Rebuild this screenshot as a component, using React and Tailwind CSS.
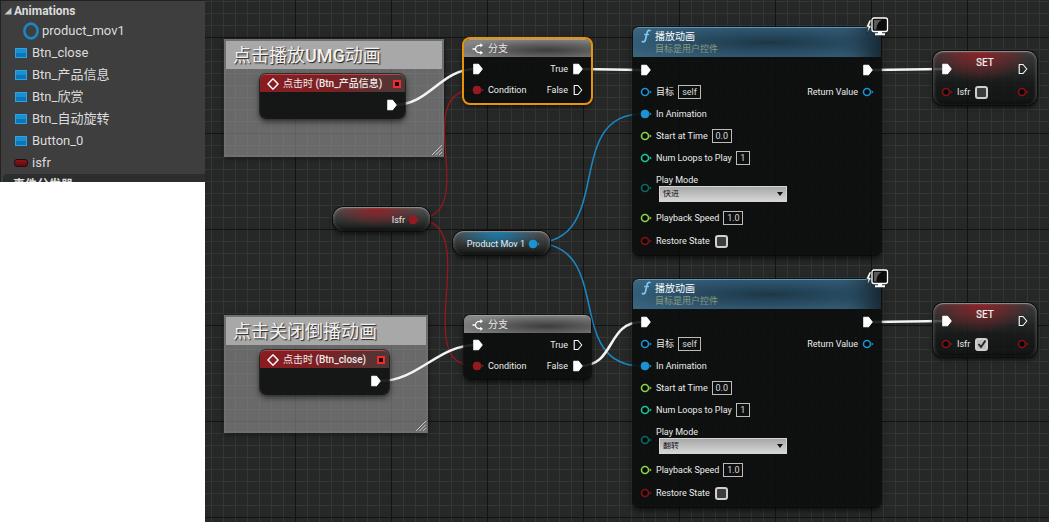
import React from "react";

const FONT = "font-['Roboto','Noto_Sans_CJK_SC',sans-serif]";

const PIN_COLORS = {
  red: "#981a20",
  darkRed: "#8a1016",
  blue: "#1c93d4",
  lime: "#8fd14a",
  mint: "#22c39a",
  teal: "#0b6b62",
};

function ExecPin({ filled = true }) {
  return (
    <svg className="h-3 w-2.5 shrink-0" viewBox="0 0 10 12" aria-hidden="true">
      <path
        d={filled ? "M.8 1.300h4.600L9.200 6l-3.800 4.700H.8z" : "M1.200 1.500h3.800L8.800 6 5 10.500H1.200z"}
        fill={filled ? "#fff" : "none"}
        stroke="#fff"
        strokeWidth="1.100"
        strokeLinejoin="round"
      />
    </svg>
  );
}

function DataPin({ color, filled = false }) {
  const c = PIN_COLORS[color];
  return (
    <svg className="h-3 w-2.5 shrink-0 overflow-visible" viewBox="0 0 10 12" aria-hidden="true">
      <circle cx="4" cy="6" r={filled ? 3.9 : 3.5} fill={filled ? c : "#04090a"} stroke={c} strokeWidth={filled ? 1 : 1.6} />
      <path d="M8.600 4.200L10.600 6l-2 1.800z" fill={c} />
    </svg>
  );
}

function BranchIcon() {
  return (
    <svg className="h-3 w-3 shrink-0" viewBox="0 0 12 12" fill="none" stroke="#fff" aria-hidden="true">
      <path d="M.5 6H3M9 2.300H7.500C5 2.300 3.500 4 3.500 6s1.500 3.700 4 3.700H9" strokeWidth="1.300" />
      <path d="M8.300.3L11 2.300 8.300 4.300zM8.300 7.700L11 9.700l-2.700 2z" fill="#fff" strokeWidth="0" />
    </svg>
  );
}

function EventIcon() {
  return (
    <svg className="h-3 w-3 shrink-0" viewBox="0 0 12 12" fill="none" stroke="#fff" strokeWidth="1.400" aria-hidden="true">
      <path d="M4.500 2.300L1 6l3.500 3.700M7.500 2.300L11 6 7.500 9.700M4.500 2.300L6 .9l1.500 1.400M4.500 9.700L6 11.100l1.500-1.400" />
    </svg>
  );
}

function ClientBadge() {
  return (
    <svg className="absolute -top-2.5 -right-2 h-5 w-6" viewBox="0 0 24 20" aria-hidden="true">
      <path d="M4.300 3L1 10h2.200L2 16.500 6.500 8.500H4.400L6.500 3z" fill="#fff" stroke="#111" strokeWidth=".6" />
      <rect x="7" y="1" width="15.500" height="13.500" rx="2" fill="#0c0c0c" stroke="#fff" strokeWidth="1.300" />
      <path d="M9 3h7.500C12.500 5.500 11.500 9 11.500 12.500H9z" fill="#5a5a5a" />
      <path d="M13 15h4v1.300h3v2H10v-2h3z" fill="#fff" />
    </svg>
  );
}

function CheckBox({ label, checked = false }) {
  return (
    <label className="flex items-center gap-[5px]">
      <span>{label}</span>
      <span className="grid place-items-center">
        <input
          type="checkbox"
          defaultChecked={checked}
          className="peer col-start-1 row-start-1 h-[13px] w-[13px] appearance-none rounded-[3px] border-2 border-[#cfcfcf] bg-[#3a3d3c] checked:bg-[#bdbdbd]"
        />
        <svg className="pointer-events-none invisible col-start-1 row-start-1 h-3 w-3 peer-checked:visible" viewBox="0 0 12 12" aria-hidden="true">
          <path d="M2.500 6l2.500 3 4.500-6.500" fill="none" stroke="#222" strokeWidth="1.800" />
        </svg>
      </span>
    </label>
  );
}

function ValueField({ label, value, width }) {
  return (
    <label className="flex items-center gap-1">
      <span>{label}</span>
      <input
        type="text"
        defaultValue={value}
        className={`h-3.5 border border-[#bcbcbc] bg-transparent p-0 text-center leading-none text-[#d8d8d8] ${width}`}
      />
    </label>
  );
}

const NODE = "absolute rounded-md bg-[#0b0e0d]/90 shadow-[0_0_0_1px_rgba(8,8,8,0.6),0_3px_6px_rgba(0,0,0,0.7)]";

function BranchNode({ place, active }) {
  const selected = active === "true";
  return (
    <section
      className={`${NODE} ${place} w-[127px] pb-1 ${selected ? "outline-2 outline-[#e8930c]" : ""}`}
    >
      <header className="flex h-[18px] items-center gap-1 rounded-t-md border-t border-[#a0a0a0] bg-[radial-gradient(ellipse_at_65%_60%,#3c3c3c,#5a5a5a_35%,#858585_80%)] px-2 text-[10px] text-[#e8e8e8]">
        <BranchIcon />
        <h3>分支</h3>
      </header>
      <div className="flex h-6 items-center justify-between pr-2 pl-[9px]">
        <ExecPin />
        <span className="flex items-center gap-[5px]">
          True <ExecPin filled={selected} />
        </span>
      </div>
      <div className="flex h-[18px] items-center justify-between pr-2 pl-[9px]">
        <span className="flex items-center gap-[5px]">
          <DataPin color="red" filled /> Condition
        </span>
        <span className="flex items-center gap-[5px]">
          False <ExecPin filled={!selected} />
        </span>
      </div>
    </section>
  );
}

function EventNode({ place, name }) {
  return (
    <section className={`${NODE} ${place} h-11`}>
      <header className="flex h-[18px] items-center gap-1 rounded-t-md border-t border-[#b5484a] bg-linear-to-r from-[#8b1c20] via-[#7a2023] to-[#4a3737] pr-1 pl-[7px] text-[10px]">
        <EventIcon />
        <h3 className="grow whitespace-nowrap">
          点击时 <b className="font-medium">({name})</b>
        </h3>
        <span className="h-2 w-2 border-2 border-[#f02a2a] bg-[#1a0505]" />
      </header>
      <div className="flex h-[26px] items-center justify-end pr-2">
        <ExecPin />
      </div>
    </section>
  );
}

function PlayNode({ place, mode }) {
  const row = "flex h-[22px] items-center gap-[5px]";
  return (
    <section className={`${NODE} ${place} w-[248px] pb-0.5`}>
      <ClientBadge />
      <header className="flex h-[30px] gap-1 rounded-t-md border-t border-[#5d93b4] bg-[radial-gradient(ellipse_at_55%_50%,#1d3848,#2d536c_50%,#43728f)] pl-2 text-[10px] shadow-[inset_-30px_0_30px_-16px_#14222b]">
        <svg className="h-4 w-2.5 shrink-0" viewBox="0 0 10 16" fill="none" stroke="#7cc8f5" aria-hidden="true">
          <path d="M9.500 3C8 1.500 6.500 2.500 6 5L4.500 11.500C4 13.800 2.500 14.500.8 13.300" strokeWidth="1.700" />
          <path d="M3 6.500h5" strokeWidth="1.300" />
        </svg>
        <div className="pt-0.5 leading-[13px]">
          <h3 className="text-white">播放动画</h3>
          <p className="text-[9px] text-[#8c9a7c]">目标是用户控件</p>
        </div>
      </header>
      <div className="px-2">
        <div className="flex h-6 items-center justify-between pt-0.5">
          <ExecPin />
          <ExecPin />
        </div>
        <div className="flex justify-between">
          <div className={row}>
            <DataPin color="blue" />
            <ValueField label="目标" value="self" width="w-[23px]" />
          </div>
          <div className={row}>
            Return Value <DataPin color="blue" />
          </div>
        </div>
        <div className={row}>
          <DataPin color="blue" filled /> In Animation
        </div>
        <div className={row}>
          <DataPin color="lime" />
          <ValueField label="Start at Time" value="0.0" width="w-5" />
        </div>
        <div className={row}>
          <DataPin color="mint" />
          <ValueField label="Num Loops to Play" value="1" width="w-3.5" />
        </div>
        <div className="flex h-[38px] items-center gap-[5px]">
          <DataPin color="teal" />
          <label className="flex flex-col leading-3">
            <span>Play Mode</span>
            <span className="ml-[3px] grid w-32 items-center">
              <select
                defaultValue={mode}
                className="col-start-1 row-start-1 h-4 appearance-none border border-[#d5d5d5] bg-linear-to-b from-[#a8a8a8] to-[#d6d6d6] px-[3px] text-[8px] leading-none text-[#111]"
              >
                <option>快进</option>
                <option>翻转</option>
              </select>
              <svg className="pointer-events-none col-start-1 row-start-1 mr-1 h-1 w-1.5 justify-self-end" viewBox="0 0 6 4" aria-hidden="true">
                <path d="M0 0h6L3 4z" fill="#111" />
              </svg>
            </span>
          </label>
        </div>
        <div className={row}>
          <DataPin color="lime" />
          <ValueField label="Playback Speed" value="1.0" width="w-5" />
        </div>
        <div className="flex h-6 items-center gap-[5px]">
          <DataPin color="darkRed" />
          <CheckBox label="Restore State" />
        </div>
      </div>
    </section>
  );
}

const GLASS = "absolute border-t border-[#8a8a8a] shadow-[0_0_0_1px_#0c0c0c,0_3px_5px_rgba(0,0,0,0.6),inset_0_-2px_3px_rgba(0,0,0,0.5),inset_2px_0_3px_-1px_rgba(200,200,200,0.4),inset_-2px_0_3px_-1px_rgba(200,200,200,0.4)]";

function SetNode({ place, checked }) {
  return (
    <section
      className={`${GLASS} ${place} h-[54px] w-[104px] rounded-[10px] bg-[radial-gradient(ellipse_50%_55%_at_45%_0%,#8a2227,transparent),linear-gradient(to_bottom,#3f3f3fd0,#141616d0_60%,#0e1010d0)] px-[9px]`}
    >
      <div className="flex h-[34px] justify-between">
        <span className="flex items-center">
          <ExecPin />
        </span>
        <h3 className="pt-[5px] text-[10px] font-medium">SET</h3>
        <span className="flex items-center">
          <ExecPin filled={false} />
        </span>
      </div>
      <div className="flex h-3 items-center justify-between">
        <span className="flex items-center gap-[5px]">
          <DataPin color="darkRed" />
          <CheckBox label="Isfr" checked={checked} />
        </span>
        <DataPin color="darkRed" />
      </div>
    </section>
  );
}

function VariableNode({ place, label, tint, color }) {
  return (
    <section className={`${GLASS} ${place} ${tint} flex h-6 w-[97px] items-center justify-end gap-1 rounded-[11px] pr-[11px] whitespace-nowrap`}>
      {label} <DataPin color={color} filled />
    </section>
  );
}

function CommentBox({ place, title }) {
  return (
    <section className={`absolute ${place} h-[118px] border-2 border-[#707070]/80 bg-[#969696]/60 shadow-[0_1px_5px_rgba(0,0,0,0.6)]`}>
      <h2 className="h-7 bg-[#a8a8a8] pl-[7px] text-[18px] leading-[30px] font-normal whitespace-nowrap text-[#f2f2f2] [text-shadow:1px_1px_1px_#222]">
        {title}
      </h2>
      <svg className="absolute right-0 bottom-0 h-2.5 w-2.5" viewBox="0 0 10 10" stroke="#c8c8c8" aria-hidden="true">
        <path d="M0 10L10 0M3.500 10L10 3.500M7 10l3-3" />
      </svg>
    </section>
  );
}

function Wires() {
  return (
    <svg className="absolute inset-0 h-full w-full" fill="none" aria-hidden="true">
      <g transform="translate(-205 0)">
        <g stroke="#96181e" strokeWidth="1.300">
          <path d="M416 219C484 219 408 90 474 90" />
          <path d="M416 219C486 219 408 366 474 366" />
        </g>
        <g stroke="#1a86c2" strokeWidth="1.600">
          <path d="M534 243C616 243 562 114 642 114" />
          <path d="M534 243C616 243 562 366 642 366" />
        </g>
        <g stroke="#f4f4f4" strokeWidth="2.600">
          <path d="M394 105C430 105 440 69 476 69" />
          <path d="M380 381C418 381 438 345 476 345" />
          <path d="M580 69L642 70" />
          <path d="M580 366C616 366 606 322 642 322" />
          <path d="M872 70L944 69" />
          <path d="M872 322L944 321" />
        </g>
      </g>
    </svg>
  );
}

const BUTTONS = ["Btn_close", "Btn_产品信息", "Btn_欣赏", "Btn_自动旋转", "Button_0"];

function Sidebar() {
  return (
    <aside className="h-[182px] w-[205px] shrink-0 overflow-hidden border-t border-l border-[#222] bg-[#3e3e3e] text-[13px] text-[#dcdcdc]">
      <h2 className="flex h-[19px] items-center gap-0.5 pl-[3px] text-[12px] font-bold">
        <svg className="h-2 w-2" viewBox="0 0 8 8" aria-hidden="true">
          <path d="M7.500.5v7H.5z" fill="#c8c8c8" />
        </svg>
        Animations
      </h2>
      <ul>
        <li className="flex h-[22px] items-center gap-[3px] pl-[22px]">
          <svg className="h-[18px] w-4" viewBox="0 0 16 18" aria-hidden="true">
            <ellipse cx="8" cy="9" rx="6.600" ry="7.400" fill="none" stroke="#1b86c4" strokeWidth="2.600" />
          </svg>
          product_mov1
        </li>
        {BUTTONS.map((name) => (
          <li key={name} className="flex h-[22px] items-center gap-[5px] pl-3.5">
            <span className="h-2.5 w-3 border border-[#2ba3e4] bg-linear-to-b from-[#1b8fd0] from-50% to-[#0d76b4] to-50%" />
            {name}
          </li>
        ))}
        <li className="flex h-[22px] items-center gap-1 pl-[13px]">
          <span className="h-2 w-3.5 rounded-[3px] border border-[#2a0a0c] bg-linear-to-b from-[#8c161b] to-[#5a0c10]" />
          isfr
        </li>
      </ul>
      <h2 className="ml-0.5 h-5 rounded-tl-sm bg-[#2c2e2d] pt-0.5 pl-2.5 text-[12px] leading-[18px] font-bold">事件分发器</h2>
    </aside>
  );
}

export default function App() {
  return (
    <main className={`flex min-h-screen items-start bg-white ${FONT}`}>
      <Sidebar />
      <div className="relative min-h-[522px] flex-1 self-stretch overflow-hidden bg-[#262727] bg-[linear-gradient(to_right,#121313_1px,transparent_1px),linear-gradient(to_bottom,#121313_1px,transparent_1px),linear-gradient(to_right,#343535_1px,transparent_1px),linear-gradient(to_bottom,#343535_1px,transparent_1px)] bg-[size:96px_96px,96px_96px,12px_12px,12px_12px] bg-[position:90px_37px,90px_37px,6px_1px,6px_1px] text-[9px] leading-3 text-[#ececec]">
        <CommentBox place="left-[19px] top-[39px] w-[220px]" title={<>点击播放<b className="font-medium">UMG</b>动画</>} />
        <CommentBox place="left-[19px] top-[315px] w-[204px]" title="点击关闭倒播动画" />
        <Wires />
        <EventNode place="left-[55px] top-[74px] w-[145px]" name="Btn_产品信息" />
        <EventNode place="left-[55px] top-[350px] w-[129px]" name="Btn_close" />
        <BranchNode place="left-[259px] top-[39px]" active="true" />
        <BranchNode place="left-[259px] top-[315px]" active="false" />
        <VariableNode
          place="left-[128px] top-[207px]"
          label="Isfr"
          color="red"
          tint="bg-[radial-gradient(ellipse_45%_70%_at_45%_10%,#8a2227,transparent),linear-gradient(to_bottom,#505050,#161818)]"
        />
        <VariableNode
          place="left-[248px] top-[231px]"
          label="Product Mov 1"
          color="blue"
          tint="bg-[radial-gradient(ellipse_45%_70%_at_45%_10%,#1878a8,transparent),linear-gradient(to_bottom,#505050,#161818)]"
        />
        <PlayNode place="left-[428px] top-[27px]" mode="快进" />
        <PlayNode place="left-[428px] top-[279px]" mode="翻转" />
        <SetNode place="left-[728px] top-[51px]" checked={false} />
        <SetNode place="left-[728px] top-[303px]" checked />
      </div>
    </main>
  );
}
